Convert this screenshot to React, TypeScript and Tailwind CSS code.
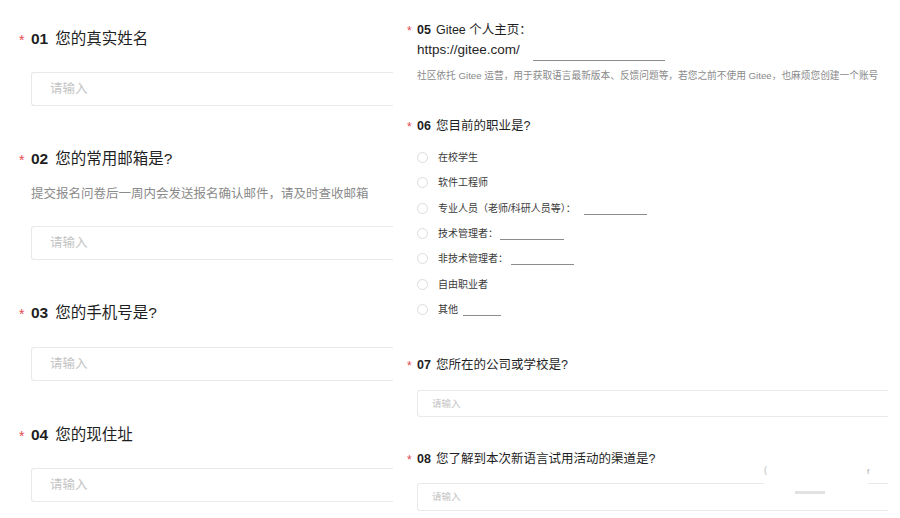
import React from "react";

const FONT = { fontFamily: '"Liberation Sans", "Noto Sans CJK SC", sans-serif' };

function Star({ big }: { big?: boolean }) {
  return (
    <span
      className={`${big ? "w-[12px] text-[14px]" : "w-[10px] text-[12px]"} shrink-0 text-[#e5484d] leading-none pt-[2px]`}
    >
      *
    </span>
  );
}

function LeftHeading({ num, text }: { num: string; text: string }) {
  return (
    <div className="flex items-center h-[20px] text-[15.5px] text-[#1f1f1f]">
      <Star big />
      <span className="font-bold">{num}</span>
      <span className="ml-[7px]">{text}</span>
    </div>
  );
}

function LeftInput() {
  return (
    <div className="ml-[12px] h-[34px] border border-[#e9e9e9] border-r-0 rounded-l-[3px] flex items-center pl-[18px] text-[12.5px] text-[#c4c4c4]">
      请输入
    </div>
  );
}

function RightHeading({ num, text }: { num: string; text: string }) {
  return (
    <div className="flex items-center h-[18px] text-[12.5px] text-[#1f1f1f]">
      <Star />
      <span className="font-bold">{num}</span>
      <span className="ml-[5px]">{text}</span>
    </div>
  );
}

function RightInput({ h }: { h: string }) {
  return (
    <div
      className={`${h} ml-[10px] border border-[#e9e9e9] border-r-0 rounded-l-[3px] flex items-center pl-[14px] text-[9.5px] text-[#c4c4c4]`}
    >
      请输入
    </div>
  );
}

const options: { label: string; line?: string; gap?: string }[] = [
  { label: "在校学生" },
  { label: "软件工程师" },
  { label: "专业人员（老师/科研人员等）：", line: "w-[63px]", gap: "ml-[8px]" },
  { label: "技术管理者：", line: "w-[64px]", gap: "ml-[2px]" },
  { label: "非技术管理者：", line: "w-[63px]", gap: "ml-[3px]" },
  { label: "自由职业者" },
  { label: "其他", line: "w-[38px]", gap: "ml-[5px]" },
];

export default function App() {
  return (
    <div className="relative w-[900px] h-[518px] bg-white overflow-hidden flex" style={FONT}>
      {/* left panel */}
      <div className="w-[393px] shrink-0 pl-[19px] pt-[29px] overflow-hidden">
        <LeftHeading num="01" text="您的真实姓名" />
        <div className="mt-[23px]">
          <LeftInput />
        </div>

        <div className="mt-[43px]">
          <LeftHeading num="02" text="您的常用邮箱是?" />
        </div>
        <div className="mt-[16px] ml-[12px] h-[18px] flex items-center text-[12.5px] text-[#8a8a8a]">
          提交报名问卷后一周内会发送报名确认邮件，请及时查收邮箱
        </div>
        <div className="mt-[23px]">
          <LeftInput />
        </div>

        <div className="mt-[43px]">
          <LeftHeading num="03" text="您的手机号是?" />
        </div>
        <div className="mt-[24px]">
          <LeftInput />
        </div>

        <div className="mt-[44px]">
          <LeftHeading num="04" text="您的现住址" />
        </div>
        <div className="mt-[23px]">
          <LeftInput />
        </div>
      </div>

      {/* right panel */}
      <div className="w-[481px] shrink-0 ml-[14px] pt-[21px] overflow-hidden">
        <RightHeading num="05" text="Gitee 个人主页：" />
        <div className="mt-[2px] ml-[10px] h-[18px] flex items-end text-[13.5px] text-[#1f1f1f]">
          <span className="leading-[18px]">https://gitee.com/</span>
          <span className="ml-[13px] mb-[-2px] w-[132px] border-b border-[#8c8c8c]" />
        </div>
        <div className="mt-[10px] ml-[10px] h-[14px] flex items-center text-[9.7px] text-[#8a8a8a] whitespace-nowrap">
          社区依托 Gitee 运营，用于获取语言最新版本、反馈问题等，若您之前不使用 Gitee，也麻烦您创建一个账号
        </div>

        <div className="mt-[34px]">
          <RightHeading num="06" text="您目前的职业是?" />
        </div>
        <div className="mt-[10px] ml-[10px] flex flex-col">
          {options.map((o) => (
            <div key={o.label} className="h-[25.33px] flex items-center text-[10px] text-[#3a3a3a]">
              <span className="w-[11px] h-[11px] rounded-full border border-[#dcdcdc] shrink-0" />
              <span className="ml-[10px]">{o.label}</span>
              {o.line && (
                <span className={`${o.gap} ${o.line} mt-[12px] border-b border-[#8c8c8c]`} />
              )}
            </div>
          ))}
        </div>

        <div className="mt-[34px]">
          <RightHeading num="07" text="您所在的公司或学校是?" />
        </div>
        <div className="mt-[16px]">
          <RightInput h="h-[27px]" />
        </div>

        <div className="mt-[33px]">
          <RightHeading num="08" text="您了解到本次新语言试用活动的渠道是?" />
        </div>
        <div className="mt-[15px]">
          <RightInput h="h-[28px]" />
        </div>
      </div>

      {/* floating residue over the last input */}
      <div className="absolute left-[764px] top-[462px] w-[104px] h-[34px] bg-white">
        <span className="absolute left-0 top-[4px] text-[9px] text-[#bbbbbb] leading-none">(</span>
        <span className="absolute left-[31px] top-[29px] w-[30px] h-[3px] bg-[#e2e2e2]" />
      </div>
      <span className="absolute left-[867px] top-[468px] text-[8px] text-[#aaaaaa] leading-none">f</span>
    </div>
  );
}
